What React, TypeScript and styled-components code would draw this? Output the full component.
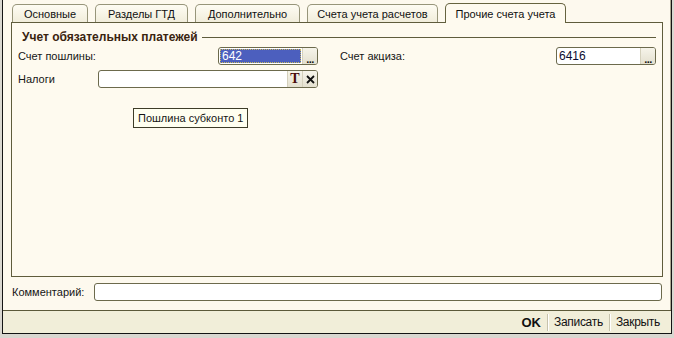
import React from 'react';
import styled, { createGlobalStyle } from 'styled-components';

const GlobalStyle = createGlobalStyle`
  html, body {
    margin: 0;
    padding: 0;
    background: #d9d7d0;
  }

  body {
    font-family: "Liberation Sans", Arial, sans-serif;
    font-size: 11px;
    color: #151515;
  }
`;

const Window = styled.div`
  box-sizing: border-box;
  width: 670px;
  height: 334px;
  margin-left: 2px;

  border: 1px solid #141414;
  border-top: none;
  box-shadow: inset -1px 0 0 #a9a690;

  background: #fdf9ee;

  display: flex;
  flex-direction: column;
`;

const Tabs = {
  Strip: styled.div`
    display: flex;
    align-items: flex-end;
    gap: 7px;

    height: 22px;
    padding-left: 9px;
  `,

  Tab: styled.div<{ $w: number; $active?: boolean }>`
    box-sizing: border-box;
    position: relative;
    z-index: ${(p) => (p.$active ? 2 : 1)};

    width: ${(p) => p.$w}px;
    height: ${(p) => (p.$active ? 20 : 18)}px;
    margin-bottom: ${(p) => (p.$active ? -1 : 0)}px;

    display: flex;
    align-items: center;
    justify-content: center;
    padding-top: ${(p) => (p.$active ? 0 : 1)}px;

    border: 1px solid ${(p) => (p.$active ? '#66633f' : '#97957a')};
    border-bottom: none;
    border-radius: 5px 5px 0 0;

    background: ${(p) =>
      p.$active ? '#fefaef' : 'linear-gradient(#fefcf3, #f1eddb)'};
    color: #111;
    white-space: nowrap;
  `,
};

const Panel = styled.div`
  position: relative;
  box-sizing: border-box;

  height: 255px;
  margin: 0 8px;

  border: 1px solid #5f5c3c;
  background: #fefaef;
`;

const Group = {
  Header: styled.div`
    display: flex;
    align-items: center;
    gap: 4px;

    height: 14px;
    margin: 7px 6px 3px 10px;

    font-size: 12px;
    font-weight: bold;
    color: #3a2410;
    white-space: nowrap;
  `,

  Line: styled.div`
    flex: 1;
    height: 1px;
    background: #5f5c3c;
  `,

  Body: styled.div`
    display: flex;
    flex-direction: column;
    gap: 5px;

    padding-left: 6px;
  `,
};

const Row = styled.div`
  display: flex;
  align-items: center;
  height: 18px;
`;

const Label = styled.div<{ $w: number }>`
  width: ${(p) => p.$w}px;
  flex-shrink: 0;
  white-space: nowrap;
  color: #151515;
`;

const Field = {
  Box: styled.div<{ $w: number; $gap?: number }>`
    box-sizing: border-box;
    display: flex;

    width: ${(p) => p.$w}px;
    height: 18px;
    margin-right: ${(p) => p.$gap ?? 0}px;

    border: 1px solid #6c6a4c;
    border-radius: 3px;
    background: #fff;
    overflow: hidden;
  `,

  Value: styled.div<{ $selected?: boolean }>`
    flex: 1;
    display: flex;
    align-items: center;

    padding-left: 2px;
    margin: ${(p) => (p.$selected ? '1px' : '0')};

    background: ${(p) => (p.$selected ? '#4c5fbe' : 'transparent')};
    outline: ${(p) => (p.$selected ? '1px dotted #c8b860' : 'none')};
    outline-offset: -1px;
    color: ${(p) => (p.$selected ? '#fff' : '#0c0c30')};
    font-size: 12px;
  `,

  Button: styled.div`
    box-sizing: border-box;
    width: 15px;
    flex-shrink: 0;

    display: flex;
    align-items: center;
    justify-content: center;

    border-left: 1px solid #d4d0bc;
    background: linear-gradient(#f6f4ea, #e4e0cf);
  `,

  Dots: styled.span`
    margin-top: 6px;
    font-weight: bold;
    font-size: 11px;
    letter-spacing: -0.5px;
    color: #111;
  `,

  T: styled.span`
    font-family: "Liberation Serif", "Times New Roman", serif;
    font-weight: bold;
    font-size: 14px;
    color: #4a0c0c;
  `,
};

const Tooltip = styled.div`
  position: absolute;
  left: 121px;
  top: 85px;

  box-sizing: border-box;
  width: 115px;
  height: 20px;

  display: flex;
  align-items: center;
  padding-left: 4px;

  border: 1px solid #3e3c28;
  background: #fffff0;
  white-space: nowrap;
  font-size: 11px;
`;

const Comment = {
  Row: styled.div`
    display: flex;
    align-items: center;

    height: 18px;
    margin-top: 6px;
    padding-left: 9px;
  `,

  Input: styled.div`
    box-sizing: border-box;
    width: 568px;
    height: 18px;

    border: 1px solid #6c6a4c;
    border-radius: 3px;
    background: #fff;
  `,
};

const Footer = {
  Bar: styled.div`
    flex: 1;
    margin-top: 9px;

    display: flex;
    align-items: center;
    justify-content: flex-end;
    padding-right: 5px;

    border-top: 1px solid #5b5939;
    background: #f1eed9;
  `,

  Button: styled.div<{ $bold?: boolean }>`
    padding: 0 6px;
    font-size: ${(p) => (p.$bold ? 13 : 12)}px;
    font-weight: ${(p) => (p.$bold ? 'bold' : 'normal')};
    letter-spacing: ${(p) => (p.$bold ? 0 : -0.3)}px;
    color: #111;
  `,

  Sep: styled.div`
    width: 1px;
    height: 17px;
    background: #c6c2ac;
    box-shadow: 1px 0 0 #fff;
  `,
};

const CrossIcon = () => (
  <svg width="9" height="9" viewBox="0 0 9 9">
    <path d="M1 1 L8 8 M8 1 L1 8" stroke="#111" strokeWidth="1.8" />
  </svg>
);

const tabs = [
  { title: 'Основные', w: 76 },
  { title: 'Разделы ГТД', w: 93 },
  { title: 'Дополнительно', w: 105 },
  { title: 'Счета учета расчетов', w: 131 },
  { title: 'Прочие счета учета', w: 121, active: true },
];

const App = () => {
  return (
    <>
      <GlobalStyle />
      <Window>
        <Tabs.Strip>
          {tabs.map((t) => (
            <Tabs.Tab key={t.title} $w={t.w} $active={t.active}>
              {t.title}
            </Tabs.Tab>
          ))}
        </Tabs.Strip>

        <Panel>
          <Group.Header>
            Учет обязательных платежей
            <Group.Line />
          </Group.Header>

          <Group.Body>
            <Row>
              <Label $w={200}>Счет пошлины:</Label>
              <Field.Box $w={100} $gap={22}>
                <Field.Value $selected>642</Field.Value>
                <Field.Button>
                  <Field.Dots>...</Field.Dots>
                </Field.Button>
              </Field.Box>
              <Label $w={216}>Счет акциза:</Label>
              <Field.Box $w={100}>
                <Field.Value>6416</Field.Value>
                <Field.Button>
                  <Field.Dots>...</Field.Dots>
                </Field.Button>
              </Field.Box>
            </Row>

            <Row>
              <Label $w={80}>Налоги</Label>
              <Field.Box $w={220}>
                <Field.Value />
                <Field.Button>
                  <Field.T>T</Field.T>
                </Field.Button>
                <Field.Button>
                  <CrossIcon />
                </Field.Button>
              </Field.Box>
            </Row>
          </Group.Body>

          <Tooltip>Пошлина субконто 1</Tooltip>
        </Panel>

        <Comment.Row>
          <Label $w={82}>Комментарий:</Label>
          <Comment.Input />
        </Comment.Row>

        <Footer.Bar>
          <Footer.Button $bold>OK</Footer.Button>
          <Footer.Sep />
          <Footer.Button>Записать</Footer.Button>
          <Footer.Sep />
          <Footer.Button>Закрыть</Footer.Button>
        </Footer.Bar>
      </Window>
    </>
  );
};

export default App;
